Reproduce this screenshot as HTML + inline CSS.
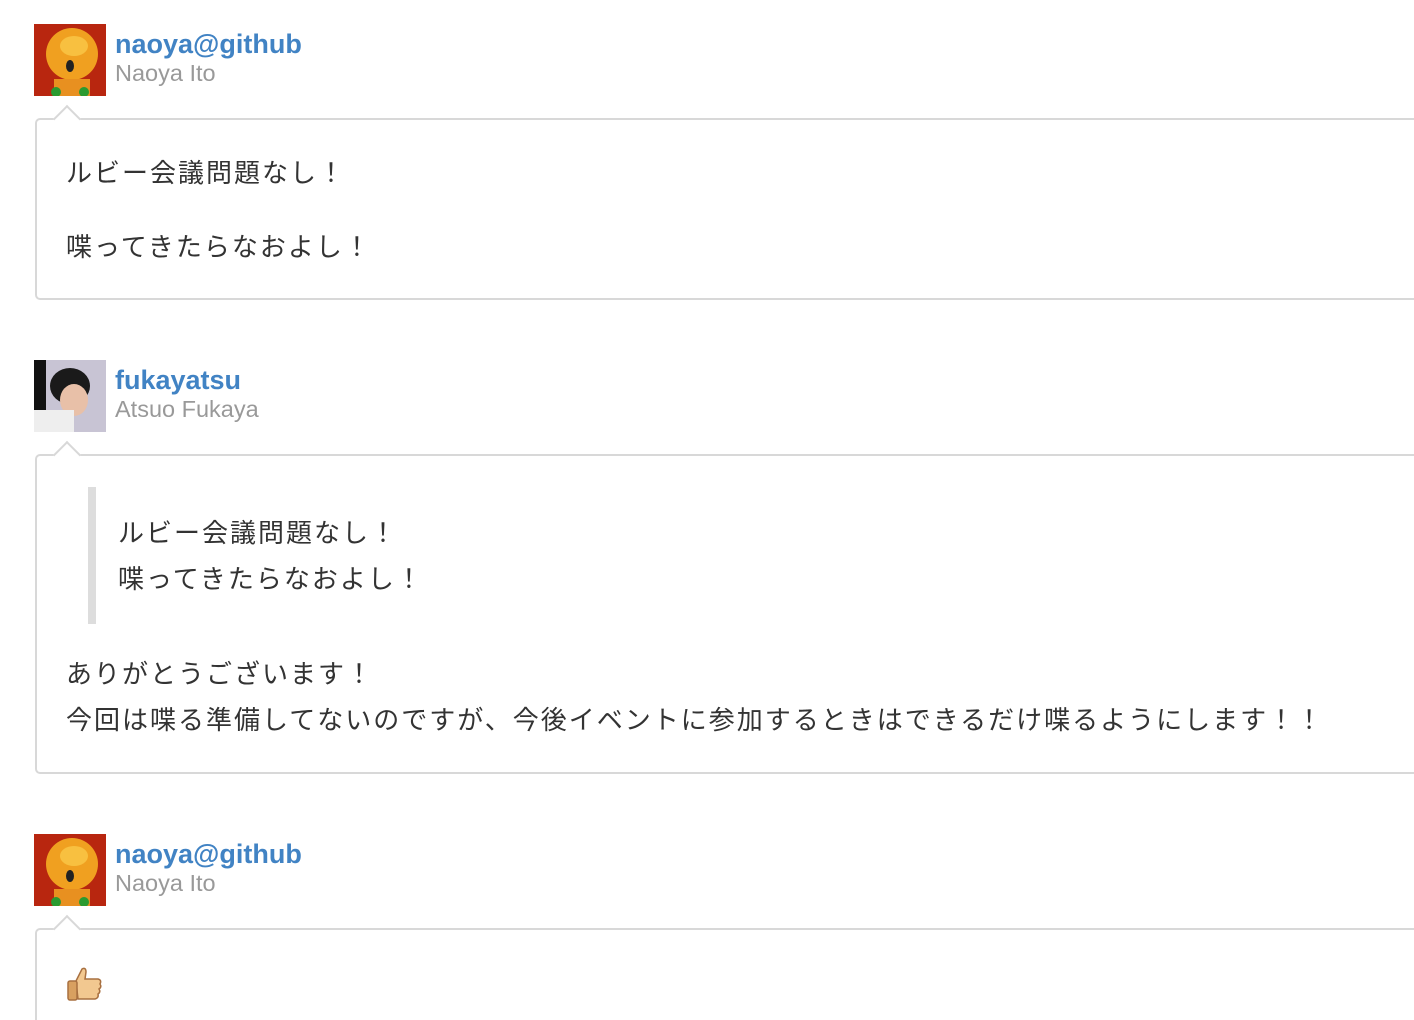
<!DOCTYPE html>
<html style="height:1020px;overflow:hidden"><head><meta charset="utf-8"><style>
body{margin:0;background:#fff;width:1414px;height:1020px;overflow:hidden;position:relative;font-family:"Liberation Sans","Noto Sans CJK JP",sans-serif;}
.av{position:absolute;left:34px;width:72px;height:72px;}
.un{position:absolute;left:115px;font-weight:bold;font-size:27px;color:#4183c4;}
.fn{position:absolute;left:115px;font-size:23.5px;color:#999;}
.box{position:absolute;left:35px;width:1379px;border:2px solid #d8d8d8;border-right:none;border-radius:5px 0 0 5px;box-sizing:border-box;}
.arr{position:absolute;left:20px;width:18px;height:18px;background:#fff;border-left:2px solid #d8d8d8;border-top:2px solid #d8d8d8;transform:rotate(45deg);top:-11px;}
.t{position:absolute;font-size:26px;color:#333;white-space:nowrap;letter-spacing:2px;}
</style></head><body>
<svg class="av" style="top:24px" viewBox="0 0 72 72"><rect width="72" height="72" fill="#b8260f"/><circle cx="38" cy="30" r="26" fill="#f0a020"/><ellipse cx="40" cy="22" rx="14" ry="10" fill="#f8c040"/><ellipse cx="36" cy="42" rx="4" ry="6" fill="#222"/><rect x="20" y="55" width="36" height="17" fill="#e89020"/><circle cx="22" cy="68" r="5" fill="#2a9a30"/><circle cx="50" cy="68" r="5" fill="#2a9a30"/></svg>
<div class="un" style="top:29px">naoya@github</div>
<div class="fn" style="top:60px">Naoya Ito</div>
<div class="box" style="top:118px;height:182px"><div class="arr"></div></div>
<div class="t" style="left:66px;top:153px">ルビー会議問題なし！</div>
<div class="t" style="left:66px;top:227px">喋ってきたらなおよし！</div>

<svg class="av" style="top:360px" viewBox="0 0 72 72"><rect width="72" height="72" fill="#c8c4d4"/><rect width="12" height="50" fill="#111"/><ellipse cx="36" cy="26" rx="20" ry="18" fill="#1a1a1a"/><ellipse cx="40" cy="40" rx="14" ry="16" fill="#e8c0a8"/><rect x="0" y="50" width="40" height="22" fill="#eee"/></svg>
<div class="un" style="top:365px">fukayatsu</div>
<div class="fn" style="top:396px">Atsuo Fukaya</div>
<div class="box" style="top:454px;height:320px"><div class="arr"></div></div>
<div style="position:absolute;left:88px;top:487px;width:8px;height:137px;background:#ddd"></div>
<div class="t" style="left:118px;top:513px">ルビー会議問題なし！</div>
<div class="t" style="left:118px;top:559px">喋ってきたらなおよし！</div>
<div class="t" style="left:66px;top:654px">ありがとうございます！</div>
<div class="t" style="left:66px;top:700px">今回は喋る準備してないのですが、今後イベントに参加するときはできるだけ喋るようにします！！</div>

<svg class="av" style="top:834px" viewBox="0 0 72 72"><rect width="72" height="72" fill="#b8260f"/><circle cx="38" cy="30" r="26" fill="#f0a020"/><ellipse cx="40" cy="22" rx="14" ry="10" fill="#f8c040"/><ellipse cx="36" cy="42" rx="4" ry="6" fill="#222"/><rect x="20" y="55" width="36" height="17" fill="#e89020"/><circle cx="22" cy="68" r="5" fill="#2a9a30"/><circle cx="50" cy="68" r="5" fill="#2a9a30"/></svg>
<div class="un" style="top:839px">naoya@github</div>
<div class="fn" style="top:870px">Naoya Ito</div>
<div class="box" style="top:928px;height:92px;border-bottom:none;border-radius:5px 0 0 0"><div class="arr"></div></div>
<svg style="position:absolute;left:66px;top:965px" width="38" height="38" viewBox="0 0 38 38"><path d="M10 16 L16 4 Q20 2 20 7 L19 14 L32 14 Q36 15 34 19 Q36 22 33 24 Q35 27 32 29 Q33 33 29 34 L12 34 Z" fill="#f2c890" stroke="#a87040" stroke-width="1.5"/><rect x="2" y="16" width="9" height="19" rx="2" fill="#d8a060" stroke="#a87040" stroke-width="1.5"/></svg>
</body></html>
